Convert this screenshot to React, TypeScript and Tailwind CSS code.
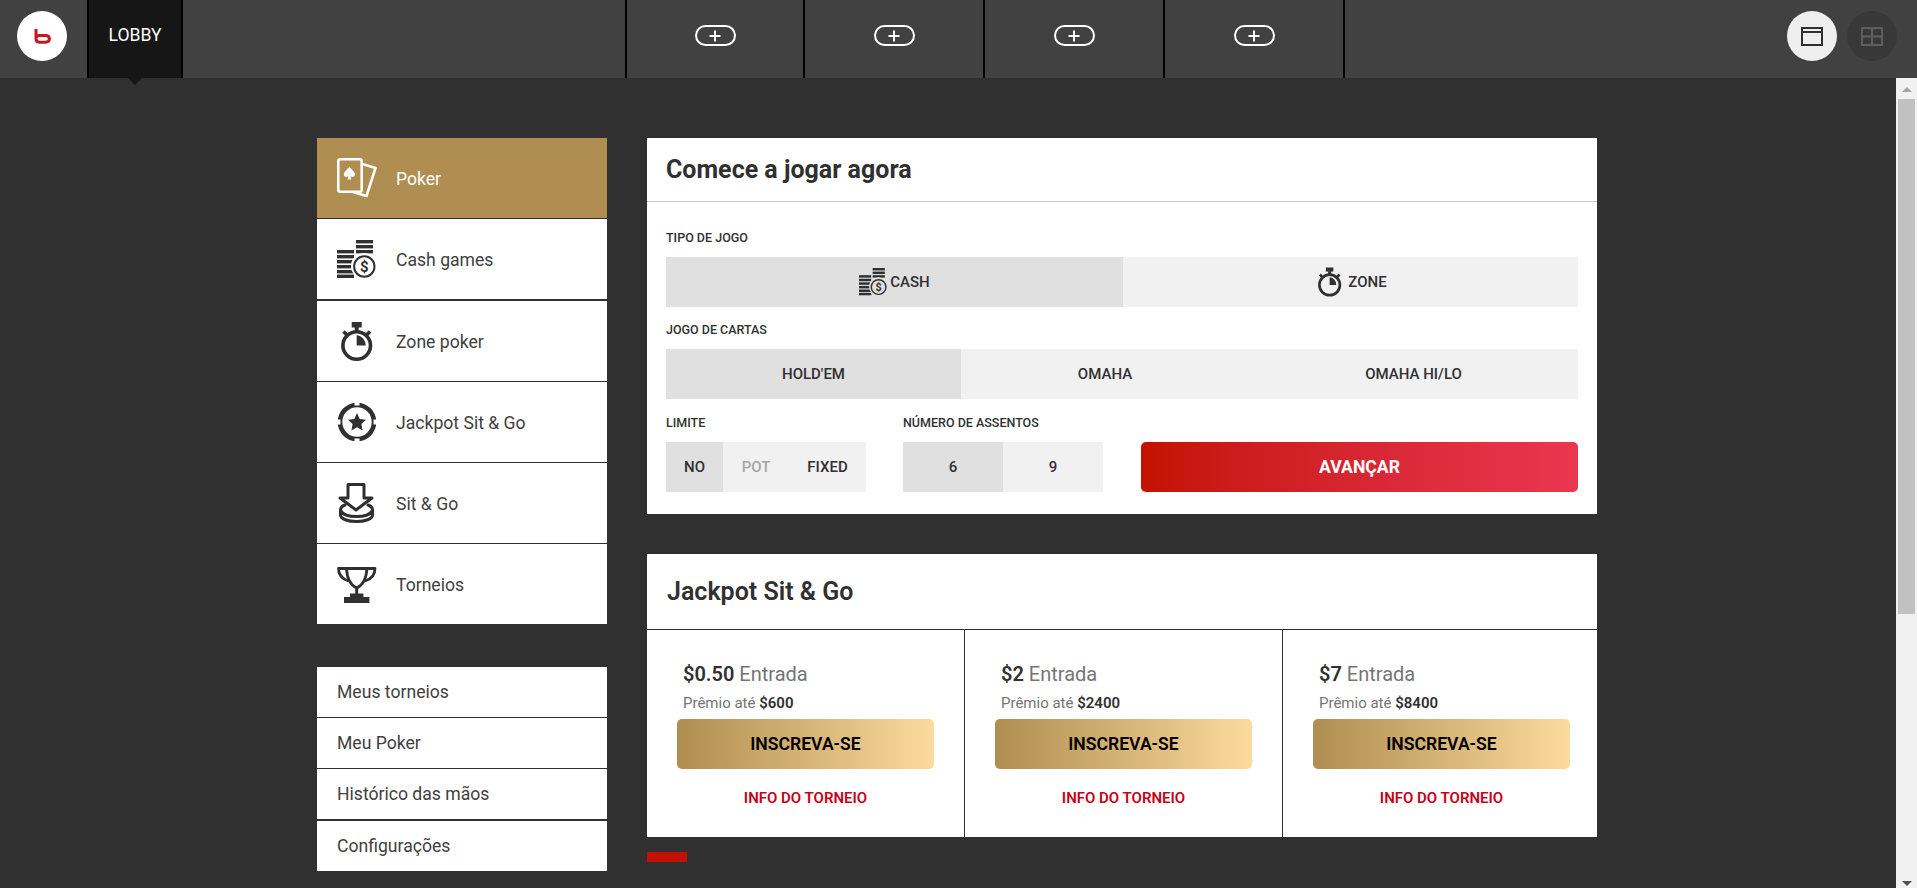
import React from 'react';

const CardsIcon = () => (
  <svg width="40" height="40" viewBox="0 0 40 40" fill="none" stroke="#fff" strokeWidth="2.6" strokeLinejoin="round">
    <path d="M25.5 6 L38.5 10 L29.5 38 L16 34" />
    <rect x="1.3" y="1.3" width="23.4" height="32.4" rx="2" />
    <path d="M12.4 8.5 C14.6 12 18 13.6 18 16.6 C18 19 15 19.6 13.3 18.2 L14.3 21.5 H10.5 L11.5 18.2 C9.8 19.6 6.8 19 6.8 16.6 C6.8 13.6 10.2 12 12.4 8.5 Z" fill="#fff" stroke="none" />
  </svg>
);

const CoinsIcon = ({ size = 39, halo = '#fff' }: { size?: number; halo?: string }) => (
  <svg width={size} height={(size * 38) / 39} viewBox="0 0 39 38" fill="#303030">
    <rect x="19" y="0" width="17" height="3.4" />
    <rect x="19" y="5" width="17" height="3.4" />
    <rect x="19" y="10" width="17" height="3.4" />
    <rect x="0" y="10" width="17" height="3.4" />
    <rect x="0" y="15" width="17" height="3.4" />
    <rect x="0" y="20" width="17" height="3.4" />
    <rect x="0" y="25" width="17" height="3.4" />
    <rect x="0" y="30" width="17" height="3.4" />
    <rect x="0" y="34.6" width="17" height="3.4" />
    <circle cx="27" cy="26" r="13" fill={halo} />
    <circle cx="27.3" cy="26.5" r="10.2" fill="none" stroke="#303030" strokeWidth="2" />
    <text x="27.3" y="32" textAnchor="middle" fontSize="15" fontWeight="700" fontFamily="Roboto, sans-serif">$</text>
  </svg>
);

const WatchIcon = ({ size = 39 }: { size?: number }) => (
  <svg width={size} height={(size * 42) / 39} viewBox="0 0 39 42" fill="none" stroke="#303030">
    <circle cx="19.7" cy="25.5" r="13.8" strokeWidth="3.6" />
    <rect x="14.7" y="2" width="10" height="5.5" fill="#303030" stroke="none" />
    <rect x="17.7" y="7" width="4" height="5" fill="#303030" stroke="none" />
    <path d="M6.5 11.5 L9.5 14.5 M33 11.5 L30 14.5" strokeWidth="3.6" />
    <path d="M19.7 15 A10.5 10.5 0 0 1 28.7 25.5 H19.7 Z" fill="#303030" stroke="none" />
  </svg>
);

const ChipIcon = () => (
  <svg width="40" height="40" viewBox="0 0 40 40" fill="none">
    <circle cx="20" cy="20" r="17" stroke="#303030" strokeWidth="4.6" />
    <path d="M17.5 0h5v3.5h-5z M17.5 36.5h5v3.5h-5z M0 17.5h3.5v5H0z M36.5 17.5h3.5v5h-3.5z" fill="#fff" />
    <path d="M20 11 L22.7 17 L29 17.8 L24.4 22.1 L25.6 28.5 L20 25.3 L14.4 28.5 L15.6 22.1 L11 17.8 L17.3 17 Z" fill="#303030" />
  </svg>
);

const DropIcon = () => (
  <svg width="39" height="40" viewBox="0 0 39 40" fill="none" stroke="#303030" strokeWidth="3" strokeLinejoin="round" strokeLinecap="round">
    <path d="M11 1.5 H27 V15 H35 L19 27 L3 15 H11 Z" />
    <path d="M8 22 C5 23 3.5 25 3.5 27 V32 C3.5 36 11 38.5 19.5 38.5 C28 38.5 35.5 36 35.5 32 V27 C35.5 25 34 23 31 22" />
    <path d="M4 28 C6 32 13 33.5 19.5 33.5 C26 33.5 33 32 35 28" />
  </svg>
);

const TrophyIcon = () => (
  <svg width="40" height="37" viewBox="0 0 40 37" fill="none" stroke="#303030" strokeWidth="2.8" strokeLinejoin="round">
    <path d="M9.5 2.5 C10 12 13 19 19.7 22 C26.4 19 29.4 12 29.9 2.5 Z" />
    <path d="M9.5 2.5 H1.5 C1.5 8.5 5 13 11.5 15 M29.9 2.5 H38 C38 8.5 34.5 13 28 15" />
    <rect x="18.2" y="22" width="3" height="7" fill="#303030" stroke="none" />
    <rect x="13" y="27.5" width="13.4" height="4" fill="#303030" stroke="none" />
    <rect x="7" y="31" width="25.4" height="6" fill="#303030" stroke="none" />
  </svg>
);

const mainMenu = [
  { label: 'Poker', icon: <CardsIcon />, active: true, border: 'border-b' },
  { label: 'Cash games', icon: <CoinsIcon />, border: 'border-b-2' },
  { label: 'Zone poker', icon: <WatchIcon />, border: 'border-b' },
  { label: 'Jackpot Sit & Go', icon: <ChipIcon />, border: 'border-b' },
  { label: 'Sit & Go', icon: <DropIcon />, border: 'border-b' },
  { label: 'Torneios', icon: <TrophyIcon />, border: '' },
];

const subMenu = [
  { label: 'Meus torneios', border: 'border-b' },
  { label: 'Meu Poker', border: 'border-b' },
  { label: 'Histórico das mãos', border: 'border-b-2' },
  { label: 'Configurações', border: '' },
];

const jackpots = [
  { entry: '$0.50', prize: '$600', border: 'w-[318px] border-r' },
  { entry: '$2', prize: '$2400', border: 'w-[318px] border-r' },
  { entry: '$7', prize: '$8400', border: 'flex-1' },
];

const Label = ({ children }: { children: React.ReactNode }) => (
  <div className="text-[12.5px] leading-[14px] font-medium text-[#303030]">{children}</div>
);

export default function App() {
  return (
    <div className="h-[888px] overflow-hidden flex flex-col bg-[#303030] text-[#303030] [font-family:Roboto,sans-serif]">
      {/* top bar */}
      <header className="h-[78px] flex-none flex bg-[#414141]">
        <div className="w-[87px] flex-none pl-[17px] pt-[11px]">
          <div className="w-[50px] h-[50px] rounded-full bg-white flex items-center justify-center">
            <svg width="17" height="15" viewBox="0 0 17 15" fill="none" stroke="#c4191f" strokeWidth="3" strokeLinejoin="round">
              <path d="M2 0 V9.5 C2 12 3.5 13.2 5.5 13.2 H11.5 C14 13.2 15.4 11.8 15.4 9.8 C15.4 7.8 14 6.4 11.5 6.4 H5 C3.5 6.4 2 7.5 2 9.5" />
            </svg>
          </div>
        </div>
        <div className="relative w-[96px] flex-none border-x-2 border-black bg-[#161616] flex items-center justify-center pb-[8px] text-white text-[17.6px]">
          LOBBY
          <div className="absolute left-[39px] top-[78px] w-0 h-0 border-x-[7px] border-x-transparent border-t-[7px] border-t-[#161616]" />
        </div>
        <div className="w-[442px] flex-none" />
        <div className="flex flex-none border-r-2 border-black">
          {['w-[178px]', 'w-[180px]', 'w-[180px]', 'w-[180px]'].map((w, i) => (
            <div key={i} className={`${w} border-l-2 border-black flex items-center justify-center pb-[7px]`}>
              <div className="w-[41px] h-[21px] rounded-full border-2 border-white flex items-center justify-center text-white">
                <svg width="12" height="12" viewBox="0 0 12 12" stroke="currentColor" strokeWidth="2">
                  <path d="M6 0.5 V11.5 M0.5 6 H11.5" />
                </svg>
              </div>
            </div>
          ))}
        </div>
        <div className="ml-auto flex gap-[10px] pr-[20px] pt-[11px]">
          <div className="w-[50px] h-[50px] rounded-full bg-[#efefef] flex items-center justify-center">
            <svg width="22" height="19" viewBox="0 0 22 19" fill="none" stroke="#303030" strokeWidth="2">
              <rect x="1" y="1" width="20" height="17" />
              <path d="M1 5 H21" />
            </svg>
          </div>
          <div className="w-[50px] h-[50px] rounded-full bg-[#383838] flex items-center justify-center">
            <svg width="22" height="19" viewBox="0 0 22 19" fill="none" stroke="#5e5e5e" strokeWidth="2">
              <rect x="1" y="1" width="20" height="17" />
              <path d="M1 9.5 H21 M11 1 V18" />
            </svg>
          </div>
        </div>
      </header>

      <div className="flex-1 flex min-h-0">
        <main className="flex-1 flex gap-[40px] pl-[317px] pt-[60px]">
          {/* left menus */}
          <aside className="w-[290px] flex-none">
            <nav>
              {mainMenu.map((item) => (
                <a
                  key={item.label}
                  className={`flex items-center box-content h-[80px] pl-[20px] border-[#303030] ${item.border} ${item.active ? 'bg-[#b08d50] text-white' : 'bg-white text-[#404040]'}`}
                >
                  <span className="w-[59px] flex-none">{item.icon}</span>
                  <span className="text-[17.6px] pt-[2px]">{item.label}</span>
                </a>
              ))}
            </nav>
            <nav className="mt-[43px]">
              {subMenu.map((item) => (
                <a
                  key={item.label}
                  className={`flex items-center box-content h-[50px] pl-[20px] pt-0 bg-white text-[17.6px] text-[#404040] border-[#303030] ${item.border}`}
                >
                  <span className="pt-[1px]">{item.label}</span>
                </a>
              ))}
            </nav>
          </aside>

          {/* right column */}
          <div className="w-[950px] flex-none">
            <section className="bg-white h-[376px]">
              <h2 className="h-[64px] px-[19px] flex items-center border-b border-[#c4c4c4] text-[25px] font-bold">
                Comece a jogar agora
              </h2>
              <div className="px-[19px] pt-[29px]">
                <Label>TIPO DE JOGO</Label>
                <div className="flex h-[50px] mt-[12px] text-[15px] font-medium">
                  <div className="w-[457px] bg-[#e0e0e0] flex items-center justify-center gap-[3px]">
                    <CoinsIcon size={28} halo="#e0e0e0" />
                    <span className="pt-[1px]">CASH</span>
                  </div>
                  <div className="flex-1 bg-[#f1f1f1] flex items-center justify-center gap-[4px] pl-[1px]">
                    <WatchIcon size={29} />
                    <span className="pt-[1px]">ZONE</span>
                  </div>
                </div>
                <div className="mt-[16px]">
                  <Label>JOGO DE CARTAS</Label>
                </div>
                <div className="flex h-[50px] mt-[12px] text-[15px] font-medium pt-0">
                  <div className="w-[295px] bg-[#e0e0e0] flex items-center justify-center pt-[1px]">HOLD'EM</div>
                  <div className="w-[288px] bg-[#f1f1f1] flex items-center justify-center pt-[1px]">OMAHA</div>
                  <div className="flex-1 bg-[#f1f1f1] flex items-center justify-center pt-[1px]">OMAHA HI/LO</div>
                </div>
                <div className="flex mt-[17px]">
                  <div className="w-[237px] flex-none">
                    <Label>LIMITE</Label>
                    <div className="flex w-[200px] h-[50px] mt-[12px] text-[15px] font-medium">
                      <div className="w-[57px] bg-[#e0e0e0] flex items-center justify-center pt-[1px]">NO</div>
                      <div className="w-[66px] bg-[#f1f1f1] flex items-center justify-center pt-[1px] text-[#a6a6a6]">POT</div>
                      <div className="flex-1 bg-[#f1f1f1] flex items-center justify-center pt-[1px]">FIXED</div>
                    </div>
                  </div>
                  <div className="w-[238px] flex-none">
                    <Label>NÚMERO DE ASSENTOS</Label>
                    <div className="flex w-[200px] h-[50px] mt-[12px] text-[15px] font-medium">
                      <div className="w-[100px] bg-[#e0e0e0] flex items-center justify-center pt-[1px]">6</div>
                      <div className="w-[100px] bg-[#f1f1f1] flex items-center justify-center pt-[1px]">9</div>
                    </div>
                  </div>
                  <button className="mt-[26px] flex-1 h-[50px] rounded-[5px] bg-gradient-to-r from-[#c31200] to-[#eb3650] text-white text-[17.6px] font-bold">
                    AVANÇAR
                  </button>
                </div>
              </div>
            </section>

            <section className="bg-white mt-[40px] h-[283px] flex flex-col">
              <h2 className="h-[76px] flex-none pl-[20px] flex items-center border-b border-[#303030] text-[25px] font-semibold">
                Jackpot Sit &amp; Go
              </h2>
              <div className="flex flex-1">
                {jackpots.map((j) => (
                  <div key={j.entry} className={`pl-[30px] border-[#303030] ${j.border}`}>
                    <div className="pl-[6px] pt-[32px] text-[20px] leading-[24px] text-[#757575]">
                      <span className="font-semibold text-[#303030]">{j.entry}</span> Entrada
                    </div>
                    <div className="pl-[6px] mt-[8px] text-[15px] leading-[18px] text-[#757575]">
                      Prêmio até <span className="font-semibold text-[#303030]">{j.prize}</span>
                    </div>
                    <button className="block mt-[7px] w-[257px] h-[50px] rounded-[5px] bg-gradient-to-r from-[#b08d50] to-[#fddb9f] text-black text-[17.6px] font-semibold">
                      INSCREVA-SE
                    </button>
                    <div className="w-[257px] mt-[20px] text-center text-[15px] leading-[18px] font-semibold text-[#c70018]">
                      INFO DO TORNEIO
                    </div>
                  </div>
                ))}
              </div>
            </section>

            <div className="mt-[15px] w-[40px] h-[10px] bg-[#c41000]" />
          </div>
        </main>

        {/* scrollbar */}
        <div className="w-[21px] flex-none bg-[#f1f1f1] flex flex-col items-center">
          <svg className="mt-[9px] flex-none" width="10" height="5" viewBox="0 0 10 5" fill="#a3a3a3">
            <path d="M5 0 L10 5 H0 Z" />
          </svg>
          <div className="mt-[7px] w-[17px] h-[515px] flex-none bg-[#c1c1c1]" />
          <svg className="mt-auto mb-[2px] flex-none" width="10" height="5" viewBox="0 0 10 5" fill="#505050">
            <path d="M0 0 H10 L5 5 Z" />
          </svg>
        </div>
      </div>
    </div>
  );
}
